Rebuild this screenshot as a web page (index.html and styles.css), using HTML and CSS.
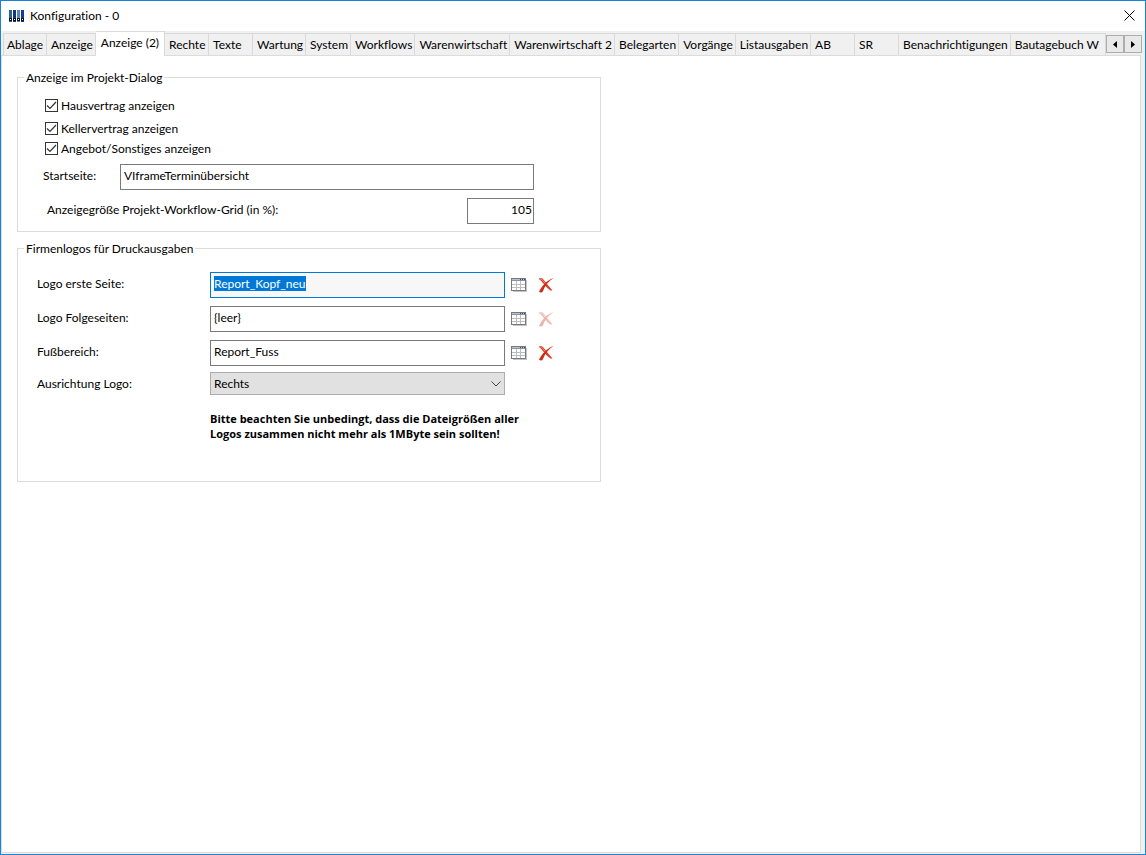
FILE: index.html
```html
<!DOCTYPE html>
<html lang="de">
  <head>
    <meta charset="utf-8">
    <title>Konfiguration - 0</title>
    <link rel="stylesheet" href="styles.css">
  </head>
  <body>
    <svg class="sprite" aria-hidden="true">
      <symbol id="icon-table" viewBox="0 0 16 14">
        <path d="M2 13.500h14M15.500 2v12" stroke="#c4c4c4" fill="none"/>
        <rect x="0.500" y="0.500" width="14" height="12" fill="#fff" stroke="#76797d"/>
        <path d="M1 1.500h13" stroke="#b9c3cf"/>
        <path d="M9 1.500h1M11 1.500h1M13 1.500h1" stroke="#34506f"/>
        <path d="M1 2.500h13" stroke="#8a94a0"/>
        <path d="M1 6.500h13M1 9.500h13M5.500 3v9M9.500 3v9" stroke="#bdbdbd"/>
      </symbol>
      <symbol id="icon-delete" viewBox="0 0 16 16">
        <path d="M0.500 2C1.500 0.500 3.500 0.500 5 2C7.500 5 11 9.500 14.500 13.500L12.500 13.500C9.500 11.500 6.500 8 4.500 5.500C3.500 4 2 2.500 0.500 2Z" fill="#dc3a22"/>
        <path d="M15.500 1C11 4 7 8.500 5 14C4.200 15.800 2.200 15.800 1 14.800C3.500 9.500 8.500 3.500 15.500 1Z" fill="#cf2b16"/>
        <path d="M1.500 1.800C4 1.500 5.500 4.500 7 6.300" stroke="#f3907c" fill="none"/>
      </symbol>
    </svg>
    <main class="window">
      <header class="titlebar">
        <svg class="logo" viewBox="0 0 15 12" aria-hidden="true">
          <path d="M0 0h3v12h-3z" fill="#2d6297"/>
          <path d="M4 0h3v12h-3z" fill="#17357f"/>
          <path d="M8 0h3v12h-3z" fill="#5b83bd"/>
          <path d="M12 0h3v12h-3z" fill="#123f96"/>
          <path d="M0 8h3v3h-3zM4 8h3v3h-3zM8 8h3v3h-3zM12 8h3v3h-3z" fill="#111"/>
          <path d="M1 9h1v1h-1zM5 9h1v1h-1zM9 9h1v1h-1zM13 9h1v1h-1z" fill="#fff"/>
        </svg>
        <h1 class="title">Konfiguration - 0</h1>
        <button class="close" type="button" aria-label="Schließen">
          <svg viewBox="0 0 11 11" width="11" height="11"><path d="M0.500 0.500l10 10M10.500 0.500l-10 10" stroke="#000"/></svg>
        </button>
      </header>
      <nav class="tabbar">
        <div class="tabs" role="tablist">
          <button class="tab" type="button" role="tab">Ablage</button>
          <button class="tab" type="button" role="tab">Anzeige</button>
          <button class="tab active" type="button" role="tab" aria-selected="true">Anzeige (2)</button>
          <button class="tab" type="button" role="tab">Rechte</button>
          <button class="tab" type="button" role="tab">Texte</button>
          <button class="tab" type="button" role="tab">Wartung</button>
          <button class="tab" type="button" role="tab">System</button>
          <button class="tab" type="button" role="tab">Workflows</button>
          <button class="tab" type="button" role="tab">Warenwirtschaft</button>
          <button class="tab" type="button" role="tab">Warenwirtschaft 2</button>
          <button class="tab" type="button" role="tab">Belegarten</button>
          <button class="tab" type="button" role="tab">Vorgänge</button>
          <button class="tab" type="button" role="tab">Listausgaben</button>
          <button class="tab" type="button" role="tab">AB</button>
          <button class="tab" type="button" role="tab">SR</button>
          <button class="tab" type="button" role="tab">Benachrichtigungen</button>
          <button class="tab last" type="button" role="tab">Bautagebuch W</button>
        </div>
        <div class="scroller">
          <button class="scroll" type="button" aria-label="Zurück">
            <svg viewBox="0 0 4 7" width="4" height="7"><path d="M4 0v7L0 3.500z"/></svg>
          </button>
          <button class="scroll" type="button" aria-label="Weiter">
            <svg viewBox="0 0 4 7" width="4" height="7"><path d="M0 0v7L4 3.500z"/></svg>
          </button>
        </div>
      </nav>
      <form class="panel">
        <fieldset class="group">
          <legend class="legend">Anzeige im Projekt-Dialog</legend>
          <div class="checks">
            <label class="check"><input class="checkbox" type="checkbox" checked>Hausvertrag anzeigen</label>
            <label class="check spaced"><input class="checkbox" type="checkbox" checked>Kellervertrag anzeigen</label>
            <label class="check"><input class="checkbox" type="checkbox" checked>Angebot/Sonstiges anzeigen</label>
          </div>
          <div class="row start">
            <label class="label" for="start">Startseite:</label>
            <input class="text" id="start" type="text" value="VIframeTerminübersicht">
          </div>
          <div class="row grid-size">
            <label class="label" for="size">Anzeigegröße Projekt-Workflow-Grid (in %):</label>
            <input class="text number" id="size" type="text" value="105">
          </div>
        </fieldset>
        <fieldset class="group logos">
          <legend class="legend">Firmenlogos für Druckausgaben</legend>
          <div class="row">
            <label class="label" for="first">Logo erste Seite:</label>
            <input class="text" id="first" type="text" value="Report_Kopf_neu" autofocus>
            <button class="icon" type="button" aria-label="Auswählen"><svg width="16" height="14"><use href="#icon-table"/></svg></button>
            <button class="icon" type="button" aria-label="Löschen"><svg width="16" height="16"><use href="#icon-delete"/></svg></button>
          </div>
          <div class="row">
            <label class="label" for="next">Logo Folgeseiten:</label>
            <input class="text" id="next" type="text" value="{leer}">
            <button class="icon" type="button" aria-label="Auswählen"><svg width="16" height="14"><use href="#icon-table"/></svg></button>
            <button class="icon" type="button" aria-label="Löschen" disabled><svg width="16" height="16"><use href="#icon-delete"/></svg></button>
          </div>
          <div class="row">
            <label class="label" for="footer">Fußbereich:</label>
            <input class="text" id="footer" type="text" value="Report_Fuss">
            <button class="icon" type="button" aria-label="Auswählen"><svg width="16" height="14"><use href="#icon-table"/></svg></button>
            <button class="icon" type="button" aria-label="Löschen"><svg width="16" height="16"><use href="#icon-delete"/></svg></button>
          </div>
          <div class="row align">
            <label class="label" for="align">Ausrichtung Logo:</label>
            <div class="dropdown">
              <select class="select" id="align">
                <option>Rechts</option>
              </select>
              <svg class="chevron" viewBox="0 0 10 6" width="10" height="6"><path d="M0.500 0.500L5 5L9.500 0.500" fill="none" stroke="#444"/></svg>
            </div>
          </div>
          <p class="hint">Bitte beachten Sie unbedingt, dass die Dateigrößen aller<br>Logos zusammen nicht mehr als 1MByte sein sollten!</p>
        </fieldset>
      </form>
    </main>
    <script>
      const firstEl = document.querySelector("#first");
      firstEl.focus();
      firstEl.select();
    </script>
  </body>
</html>
```
FILE: styles.css
```css
* {
  box-sizing: border-box;
}

body,
button,
input,
select {
  margin: 0;
  color: #000;
  font: 12px/16px Lato, "Open Sans", sans-serif;
  font-variant-ligatures: none;
}

button {
  padding: 0;
  border: 0;
  background: none;
}

.sprite {
  display: none;
}

.window {
  display: flex;
  flex-direction: column;
  min-height: 100vh;
  border: 1px solid #1883d7;
  background-color: #f0f0f0;
}

.titlebar {
  display: flex;
  align-items: center;
  height: 30px;
  padding: 0 10px 1px 8px;
  background-color: #fff;
}

.logo {
  width: 15px;
  height: 12px;
}

.title {
  flex: 1;
  margin: 0 0 0 6px;
  font-size: 12px;
  font-weight: normal;
}

.close {
  display: flex;
}

/* one pixel taller than its tabs, so the active one covers the panel border */
.tabbar {
  display: flex;
  z-index: 1;
  height: 25px;
  margin-bottom: -1px;
  padding: 0 3px 0 2px;
}

.tabs {
  display: flex;
  flex: 1;
  align-items: flex-start;
  min-width: 0;
  overflow: hidden;
}

.tab {
  flex: none;
  min-width: 44px;
  height: 22px;
  margin-top: 2px;
  padding: 0 2px 0 4px;
  border-top: 1px solid #d9d9d9;
  border-right: 1px solid #d9d9d9;
  text-align: left;
  white-space: nowrap;
}

.tab:first-child {
  padding-left: 3px;
  border-left: 1px solid #d9d9d9;
}

.active {
  height: 25px;
  margin-top: 0;
  padding: 0 5px 3px;
  background-color: #fff;
}

.last {
  flex: 1;
}

.scroller {
  display: flex;
  align-self: center;
  margin-top: 1px;
}

.scroll {
  display: flex;
  align-items: center;
  justify-content: center;
  width: 18px;
  height: 18px;
  border: 1px solid #adadad;
  background-color: #e9e9e9;
}

.panel {
  flex: 1;
  margin: 0 4px 1px 0;
  padding: 14px 15px;
  border: 1px solid #dcdcdc;
  background-color: #fff;
}

.group {
  max-width: 584px;
  min-width: 0;
  margin: 0 0 9px;
  padding: 11px 66px 7px 19px;
  border: 1px solid #dcdcdc;
}

.legend {
  margin-left: -13px;
  padding: 0 2px;
  line-height: 15px;
}

.checks {
  padding-left: 8px;
}

.check {
  display: flex;
  align-items: center;
  gap: 3px;
  height: 20px;
}

.spaced {
  margin-top: 3px;
}

.checkbox {
  width: 13px;
  height: 13px;
  margin: 0 0 2px;
  border: 1px solid #333;
  background: #fff url("data:image/svg+xml,%3Csvg xmlns='http://www.w3.org/2000/svg' viewBox='0 0 11 11'%3E%3Cpath d='M1 5.500l3 3L10 2' fill='none' stroke='%23333' stroke-width='1.200'/%3E%3C/svg%3E");
  appearance: none;
}

.row {
  display: flex;
  align-items: center;
  margin-top: 8px;
}

.label {
  flex: none;
  width: 173px;
  padding-bottom: 2px;
}

.text {
  flex: 1;
  min-width: 0;
  height: 26px;
  padding: 0 3px 3px;
  border: 1px solid #7a7a7a;
  background-color: #fff;
}

.text:focus {
  border-color: #0078d7;
  outline: none;
  background-color: #f7f7f7;
}

.text::selection {
  background-color: #0078d7;
  color: #fff;
}

.start {
  margin-top: 5px;
  padding-left: 6px;
}

.start .label {
  width: 77px;
}

.grid-size {
  justify-content: space-between;
  padding-left: 10px;
}

.grid-size .label {
  width: auto;
}

.number {
  flex: none;
  width: 67px;
  padding: 0 1px 3px;
  text-align: right;
}

.logos {
  min-height: 241px;
  padding-top: 8px;
  padding-right: 46px;
}

.logos .text {
  margin-right: 6px;
}

.icon {
  display: flex;
  align-items: center;
  width: 16px;
  height: 16px;
}

.icon + .icon {
  margin-left: 11px;
}

.icon:disabled {
  opacity: 0.35;
}

.align {
  margin-top: 6px;
  padding-right: 49px;
}

.align .label {
  padding-bottom: 0;
}

.dropdown {
  display: grid;
  flex: 1;
  align-items: center;
}

.select {
  grid-area: 1 / 1;
  width: 100%;
  height: 23px;
  padding: 0 3px;
  border: 1px solid #adadad;
  border-radius: 0;
  background-color: #e1e1e1;
  appearance: none;
}

.chevron {
  grid-area: 1 / 1;
  justify-self: end;
  margin-right: 4px;
  pointer-events: none;
}

.hint {
  margin: 16px 0 0 173px;
  font: bold 11px/15px "Open Sans", sans-serif;
  white-space: nowrap;
}
```
